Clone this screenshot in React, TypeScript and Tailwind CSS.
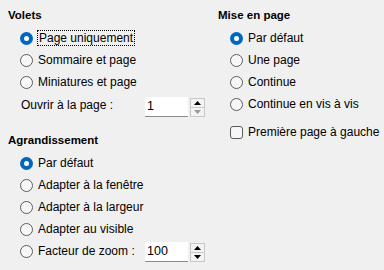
import React from "react";

const font = { fontFamily: '"Liberation Sans", Arial, sans-serif' };

function Radio({ checked }: { checked?: boolean }) {
  return checked ? (
    <span className="w-[13px] h-[13px] rounded-full bg-[#0067c0] flex items-center justify-center shrink-0">
      <span className="w-[5px] h-[5px] rounded-full bg-white" />
    </span>
  ) : (
    <span className="w-[13px] h-[13px] rounded-full border border-[#5c5c5c] bg-[#f7f7f7] shrink-0 box-border" />
  );
}

function RadioRow({ label, checked, focus }: { label: string; checked?: boolean; focus?: boolean }) {
  return (
    <div className="h-[22px] flex items-center pl-[12px]">
      <Radio checked={checked} />
      <span
        className={
          focus
            ? "ml-[4px] px-[1px] leading-[14px] border border-dotted border-black"
            : "ml-[5px] leading-[14px]"
        }
      >
        {label}
      </span>
    </div>
  );
}

function Heading({ children }: { children: React.ReactNode }) {
  return <div className="h-[22px] flex items-center font-bold text-[11.5px]">{children}</div>;
}

function Spin({ value, downDisabled }: { value: string; downDisabled?: boolean }) {
  return (
    <div className="flex items-start h-[20px]">
      <div className="w-[43px] h-[20px] bg-white border-b border-[#8a8a8a] flex items-center pl-[2px] text-[12.5px] box-border">
        {value}
      </div>
      <div className="ml-[2px] mt-[1px] w-[15px] h-[19px] flex flex-col border border-[#c8c8c8] bg-[#f3f3f3] box-border">
        <div className="flex-1 flex items-center justify-center border-b border-[#c8c8c8]">
          <svg width="7" height="4" viewBox="0 0 7 4">
            <polygon points="0,4 7,4 3.5,0" fill="#000" />
          </svg>
        </div>
        <div className="flex-1 flex items-center justify-center">
          <svg width="7" height="4" viewBox="0 0 7 4">
            <polygon points="0,0 7,0 3.5,4" fill={downDisabled ? "#9a9a9a" : "#000"} />
          </svg>
        </div>
      </div>
    </div>
  );
}

export default function App() {
  return (
    <div style={font} className="w-[384px] h-[270px] bg-[#f0f0f0] text-[12px] text-black flex overflow-hidden">
      <div className="w-[218px] pl-[8px] pt-[5px] flex flex-col">
        <Heading>Volets</Heading>
        <RadioRow label="Page uniquement" checked focus />
        <RadioRow label="Sommaire et page" />
        <RadioRow label="Miniatures et page" />
        <div className="h-[20px] mt-[4px] flex items-start">
          <span className="pl-[13px] w-[137px] leading-[14px] mt-[1px]">Ouvrir à la page :</span>
          <Spin value="1" downDisabled />
        </div>
        <div className="mt-[13px]">
          <Heading>Agrandissement</Heading>
        </div>
        <RadioRow label="Par défaut" checked />
        <RadioRow label="Adapter à la fenêtre" />
        <RadioRow label="Adapter à la largeur" />
        <RadioRow label="Adapter au visible" />
        <div className="h-[20px] mt-[2px] flex items-start">
          <div className="w-[137px] pl-[12px] flex items-center h-[18px]">
            <Radio />
            <span className="ml-[5px] leading-[14px]">Facteur de zoom :</span>
          </div>
          <Spin value="100" />
        </div>
      </div>
      <div className="flex-1 pt-[5px] flex flex-col">
        <Heading>Mise en page</Heading>
        <RadioRow label="Par défaut" checked />
        <RadioRow label="Une page" />
        <RadioRow label="Continue" />
        <RadioRow label="Continue en vis à vis" />
        <div className="h-[22px] mt-[6px] flex items-center pl-[12px]">
          <span className="w-[13px] h-[13px] rounded-[3px] border border-[#5c5c5c] bg-[#f7f7f7] box-border shrink-0" />
          <span className="ml-[5px] leading-[14px]">Première page à gauche</span>
        </div>
      </div>
    </div>
  );
}
